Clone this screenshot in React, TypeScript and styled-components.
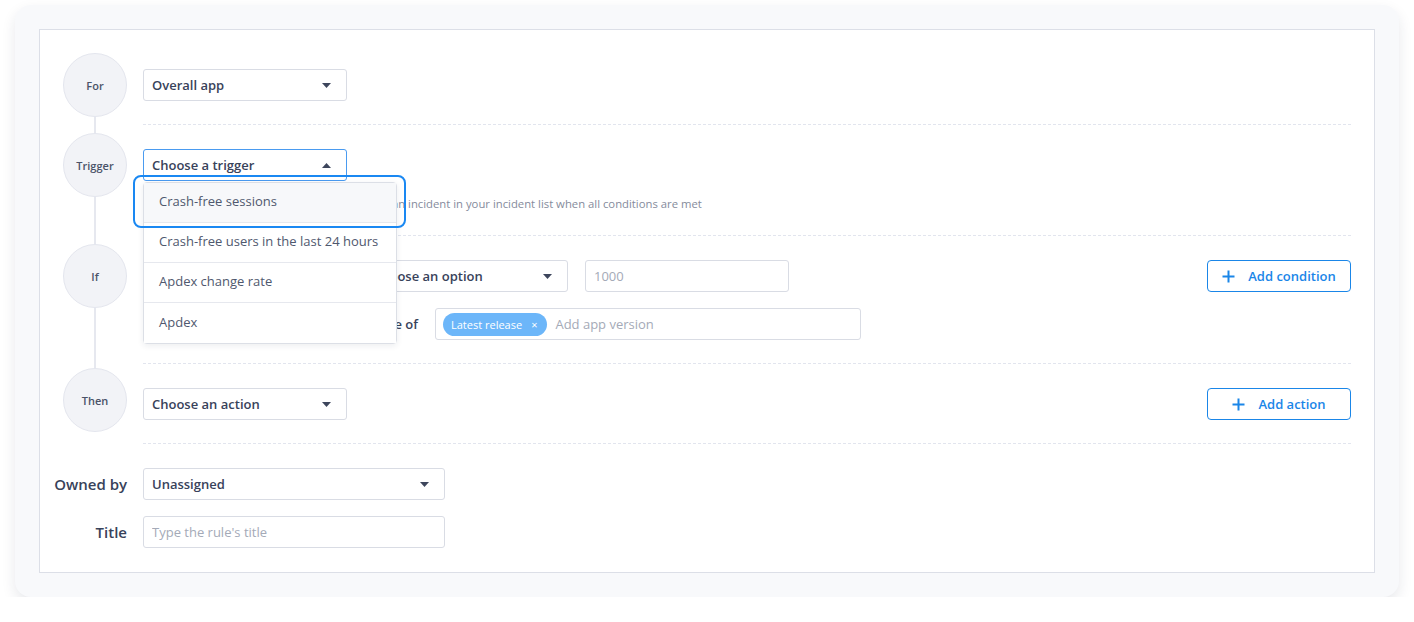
import styled, {createGlobalStyle} from 'styled-components'

const GlobalStyle = createGlobalStyle`
    body {
        margin: 0;
        background: #ffffff;
        font-family: 'Open Sans', 'Liberation Sans', sans-serif;
        color: #38425a;
    }
`

const triggerOptions = [
    'Crash-free sessions',
    'Crash-free users in the last 24 hours',
    'Apdex change rate',
    'Apdex',
]

const Caret = ({up}: {up?: boolean}) => (
    <svg width="9" height="5" viewBox="0 0 9 5">
        <path d={up ? 'M0 5 L4.5 0 L9 5 Z' : 'M0 0 L9 0 L4.5 5 Z'} fill="#3d465c" />
    </svg>
)

const PlusIcon = () => (
    <svg width="13" height="13" viewBox="0 0 13 13">
        <path d="M6.5 0.5 V12.5 M0.5 6.5 H12.5" stroke="#1a86e8" strokeWidth="2" />
    </svg>
)

// Rule editor for an alerting rule
const App = () => {
    return (
        <>
            <GlobalStyle />
            <Card>
                <Panel>
                    <Steps>
                        <Step>
                            <Rail>
                                <Circle>For</Circle>
                                <RailLine />
                            </Rail>
                            <StepContent $top={16} $gap={8}>
                                <Select $width={204}>
                                    Overall app
                                    <Caret />
                                </Select>
                            </StepContent>
                        </Step>

                        <Step>
                            <Rail>
                                <Circle>Trigger</Circle>
                                <RailLine />
                            </Rail>
                            <StepContent $top={16} $gap={8}>
                                <SelectWrap>
                                    <Select $width={204} $open>
                                        Choose a trigger
                                        <Caret up />
                                    </Select>
                                    <Menu>
                                        <Highlight />
                                        {triggerOptions.map((option, i) => (
                                            <MenuItem key={option} $active={i === 0}>
                                                {option}
                                            </MenuItem>
                                        ))}
                                    </Menu>
                                </SelectWrap>
                                <HelperText>
                                    Once this is triggered, Bugsnag will then create an incident in your incident list
                                    when all conditions are met
                                </HelperText>
                            </StepContent>
                        </Step>

                        <Step>
                            <Rail>
                                <Circle>If</Circle>
                                <RailLine />
                            </Rail>
                            <StepContent $top={16} $gap={4}>
                                <SplitRow>
                                    <ConditionGroup>
                                        <FieldRow>
                                            <Select $width={204}>
                                                Crash-free sessions
                                                <Caret />
                                            </Select>
                                            <Select $width={204}>
                                                Choose an option
                                                <Caret />
                                            </Select>
                                            <TextInput $width={204} placeholder="1000" />
                                        </FieldRow>
                                        <FieldRow>
                                            <InlineLabel>In the release stage of</InlineLabel>
                                            <TagInput>
                                                <Chip>
                                                    Latest release
                                                    <ChipClose>×</ChipClose>
                                                </Chip>
                                                <TagPlaceholder>Add app version</TagPlaceholder>
                                            </TagInput>
                                        </FieldRow>
                                    </ConditionGroup>
                                    <OutlineButton>
                                        <PlusIcon />
                                        Add condition
                                    </OutlineButton>
                                </SplitRow>
                            </StepContent>
                        </Step>

                        <Step>
                            <Rail>
                                <Circle>Then</Circle>
                            </Rail>
                            <StepContent $top={20} $gap={0}>
                                <SplitRow>
                                    <Select $width={204}>
                                        Choose an action
                                        <Caret />
                                    </Select>
                                    <OutlineButton>
                                        <PlusIcon />
                                        Add action
                                    </OutlineButton>
                                </SplitRow>
                            </StepContent>
                        </Step>
                    </Steps>

                    <Fields>
                        <FieldLabel>Owned by</FieldLabel>
                        <Select $width={302}>
                            Unassigned
                            <Caret />
                        </Select>
                        <FieldLabel>Title</FieldLabel>
                        <TextInput $width={302} placeholder="Type the rule's title" />
                    </Fields>
                </Panel>
            </Card>
        </>
    )
}

export default App

const Card = styled.div`
    box-sizing: border-box;
    width: 1384px;
    height: 592px;
    margin: 5px 0 0 15px;
    padding: 24px;
    background: #f8f9fb;
    border-radius: 16px;
    box-shadow: 0 6px 14px rgba(30, 40, 70, 0.1);
`

const Panel = styled.div`
    box-sizing: border-box;
    height: 100%;
    padding-top: 23px;
    background: #ffffff;
    border: 1px solid #dcdfe7;
`

const Steps = styled.div`
    display: flex;
    flex-direction: column;
    padding: 0 23px;
`

const Step = styled.div`
    display: flex;
    gap: 16px;
`

const Rail = styled.div`
    width: 64px;
    flex-shrink: 0;
    display: flex;
    flex-direction: column;
    align-items: center;
`

const Circle = styled.div`
    box-sizing: border-box;
    width: 64px;
    height: 64px;
    flex-shrink: 0;
    display: flex;
    align-items: center;
    justify-content: center;
    border-radius: 50%;
    background: #f2f3f7;
    border: 1px solid #e4e6ee;
    font-size: 11px;
    font-weight: 600;
    color: #4a5268;
`

const RailLine = styled.div`
    flex: 1;
    width: 2px;
    background: #e6e8ef;
`

const StepContent = styled.div<{$top: number; $gap: number}>`
    flex: 1;
    padding-top: ${(p) => p.$top}px;
    padding-bottom: 23px;
    margin-bottom: ${(p) => p.$gap}px;
    border-bottom: 1px dashed #e2e5ee;
`

const SelectWrap = styled.div`
    position: relative;
    width: 204px;
`

const Select = styled.div<{$width: number; $open?: boolean}>`
    box-sizing: border-box;
    width: ${(p) => p.$width}px;
    height: 32px;
    padding: 0 15px 0 8px;
    display: flex;
    align-items: center;
    justify-content: space-between;
    background: #ffffff;
    border: 1px solid ${(p) => (p.$open ? '#4a9bf0' : '#d9dce4')};
    border-radius: 3px;
    font-size: 13px;
    font-weight: 600;
    color: #38425a;
`

const Menu = styled.div`
    position: absolute;
    top: 33px;
    left: 0;
    width: 254px;
    box-sizing: border-box;
    background: #ffffff;
    border: 1px solid #dcdfe6;
    border-radius: 4px;
    box-shadow: 0 2px 6px rgba(30, 40, 70, 0.08);
    z-index: 2;
`

const Highlight = styled.div`
    position: absolute;
    left: -11px;
    top: -8px;
    width: 273px;
    height: 53px;
    box-sizing: border-box;
    border: 2px solid #1a88f2;
    border-radius: 8px;
    pointer-events: none;
`

const MenuItem = styled.div<{$active?: boolean}>`
    height: 40px;
    box-sizing: border-box;
    padding: 0 15px 3px;
    display: flex;
    align-items: center;
    background: ${(p) => (p.$active ? '#f7f8fa' : '#ffffff')};
    border-bottom: 1px solid #e6e8ee;
    font-size: 13px;
    color: #4f586e;

    &:last-child {
        border-bottom: none;
    }
`

const HelperText = styled.div`
    margin-top: 15px;
    font-size: 11.3px;
    line-height: 16px;
    color: #858b9c;
`

const SplitRow = styled.div`
    display: flex;
    justify-content: space-between;
    align-items: flex-start;
`

const ConditionGroup = styled.div`
    display: flex;
    flex-direction: column;
    gap: 16px;
`

const FieldRow = styled.div`
    display: flex;
    align-items: center;
    gap: 17px;
`

const TextInput = styled.input<{$width: number}>`
    box-sizing: border-box;
    width: ${(p) => p.$width}px;
    height: 32px;
    padding: 0 8px;
    border: 1px solid #d9dce4;
    border-radius: 3px;
    font-family: inherit;
    font-size: 13px;
    color: #38425a;
    outline: none;

    &::placeholder {
        color: #a4aab7;
    }
`

const InlineLabel = styled.div`
    width: 275px;
    text-align: right;
    font-size: 13px;
    font-weight: 600;
    color: #38425a;
`

const TagInput = styled.div`
    box-sizing: border-box;
    width: 426px;
    height: 32px;
    padding: 0 7px;
    display: flex;
    align-items: center;
    gap: 8px;
    border: 1px solid #d9dce4;
    border-radius: 3px;
`

const Chip = styled.span`
    height: 23px;
    padding: 0 10px 0 8px;
    display: inline-flex;
    align-items: center;
    gap: 9px;
    background: #6cb6f9;
    border-radius: 12px;
    font-size: 11px;
    color: #ffffff;
`

const ChipClose = styled.span`
    font-size: 11px;
`

const TagPlaceholder = styled.span`
    font-size: 13px;
    color: #a4aab7;
`

const OutlineButton = styled.button`
    box-sizing: border-box;
    width: 144px;
    height: 32px;
    display: flex;
    align-items: center;
    justify-content: center;
    gap: 13px;
    background: #ffffff;
    border: 1px solid #1a86e8;
    border-radius: 4px;
    font-family: inherit;
    font-size: 13px;
    font-weight: 600;
    color: #1a86e8;
    cursor: pointer;
`

const Fields = styled.div`
    display: grid;
    grid-template-columns: 87px auto;
    justify-content: start;
    align-items: center;
    column-gap: 16px;
    row-gap: 16px;
    margin-top: 24px;
`

const FieldLabel = styled.div`
    text-align: right;
    font-size: 15px;
    font-weight: 600;
    color: #38425a;
`
